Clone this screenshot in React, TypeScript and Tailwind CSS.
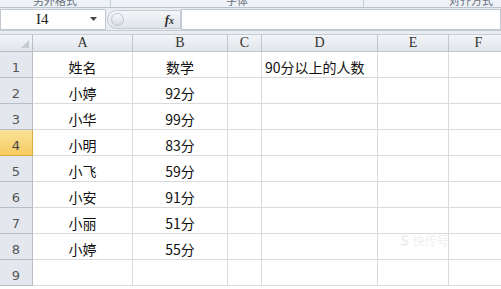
import React from "react";

const cols = ["A", "B", "C", "D", "E", "F"];
const rows: string[][] = [
  ["姓名", "数学", "", "90分以上的人数", "", ""],
  ["小婷", "92分", "", "", "", ""],
  ["小华", "99分", "", "", "", ""],
  ["小明", "83分", "", "", "", ""],
  ["小飞", "59分", "", "", "", ""],
  ["小安", "91分", "", "", "", ""],
  ["小丽", "51分", "", "", "", ""],
  ["小婷", "55分", "", "", "", ""],
  ["", "", "", "", "", ""],
];

const cellFont = { fontFamily: '"Noto Sans CJK SC", "Noto Sans", sans-serif' };
const serif = { fontFamily: '"Liberation Serif", "DejaVu Serif", serif' };

export default function App() {
  return (
    <div className="w-[501px] h-[289px] overflow-hidden bg-white relative" style={cellFont}>
      {/* ribbon remnant */}
      <div className="h-[8px] flex bg-[#eef1f5] border-b border-[#b9c3cf] overflow-hidden text-[11px] text-[#6a7480] leading-none">
        <div className="w-[111px] border-r border-[#c6cdd6] flex justify-center">
          <span className="-mt-[5px]">另外格式</span>
        </div>
        <div className="w-[253px] border-r border-[#c6cdd6] flex justify-center">
          <span className="-mt-[5px]">字体</span>
        </div>
        <div className="flex-1 flex justify-end pr-[8px]">
          <span className="-mt-[5px]">对齐方式</span>
        </div>
      </div>

      {/* formula bar */}
      <div className="h-[23px] flex items-center bg-[#e9edf2] border-b border-[#c5ccd5]">
        <div className="w-[106px] h-[21px] bg-white border border-[#c0c8d2] flex items-center">
          <span className="ml-[35px] text-[15px] text-[#222] leading-none" style={serif}>I4</span>
          <svg className="ml-auto mr-[8px]" width="7" height="4" viewBox="0 0 7 4">
            <path d="M0 0h7L3.5 4z" fill="#444" />
          </svg>
        </div>
        <div className="w-[74px] h-[19px] ml-[1px] rounded-l-full bg-gradient-to-b from-[#f4f6f8] to-[#dfe4ea] border border-[#c4cbd4] flex items-center">
          <div className="ml-[3px] w-[13px] h-[13px] rounded-full bg-gradient-to-b from-[#f8f9fa] to-[#d6dbe1] border border-[#bcc4cd]" />
          <span className="ml-auto mr-[6px] text-[13px] italic font-bold text-[#333] leading-none" style={serif}>
            f<span className="text-[10px]">x</span>
          </span>
        </div>
        <div className="flex-1 h-[21px] bg-white border border-[#c0c8d2]" />
      </div>
      <div className="h-[4px] bg-[#e9edf2] border-b border-[#c5ccd5]" />

      {/* grid */}
      <div className="grid grid-cols-[33px_100px_95px_34px_116px_71px_60px] text-[14px] text-[#111]">
        <div className="h-[17px] bg-gradient-to-b from-[#f3f5f8] to-[#e1e5eb] border-r border-b border-[#b7bec8] flex items-end justify-end p-[3px]">
          <svg width="8" height="8" viewBox="0 0 8 8">
            <path d="M8 0v8H0z" fill="#c5cbd3" />
          </svg>
        </div>
        {cols.map((c) => (
          <div
            key={c}
            className="h-[17px] bg-gradient-to-b from-[#f3f5f8] to-[#e1e5eb] border-r border-b border-[#c0c7d0] flex items-center justify-center text-[14px] text-[#333] leading-none"
            style={serif}
          >
            {c}
          </div>
        ))}
        {rows.map((r, i) => (
          <React.Fragment key={i}>
            <div
              className={
                i === 3
                  ? "h-[26px] bg-gradient-to-b from-[#fbe39a] to-[#f6ca5e] border-r border-b border-[#e0a93c] flex items-end justify-center pb-[3px] text-[13px] text-[#444] leading-none"
                  : "h-[26px] bg-[#e4e8ee] border-r border-b border-[#b7bec8] flex items-end justify-center pb-[3px] text-[13px] text-[#555] leading-none"
              }
              style={{ fontFamily: '"DejaVu Sans", sans-serif' }}
            >
              {i + 1}
            </div>
            {r.map((v, j) => (
              <div
                key={j}
                className={
                  j === 3
                    ? "h-[26px] border-r border-b border-[#d8dadc] flex items-end pl-[3px] pb-[3px] leading-none whitespace-nowrap"
                    : "h-[26px] border-r border-b border-[#d8dadc] flex items-end justify-center pb-[3px] leading-none whitespace-nowrap"
                }
              >
                {v}
              </div>
            ))}
          </React.Fragment>
        ))}
      </div>

      {/* watermark */}
      <div className="absolute left-[400px] top-[230px] flex items-center gap-[4px] text-[#ececec] opacity-80 pointer-events-none">
        <span className="text-[14px] font-bold">S</span>
        <span className="text-[12px]">快传号</span>
      </div>
    </div>
  );
}
